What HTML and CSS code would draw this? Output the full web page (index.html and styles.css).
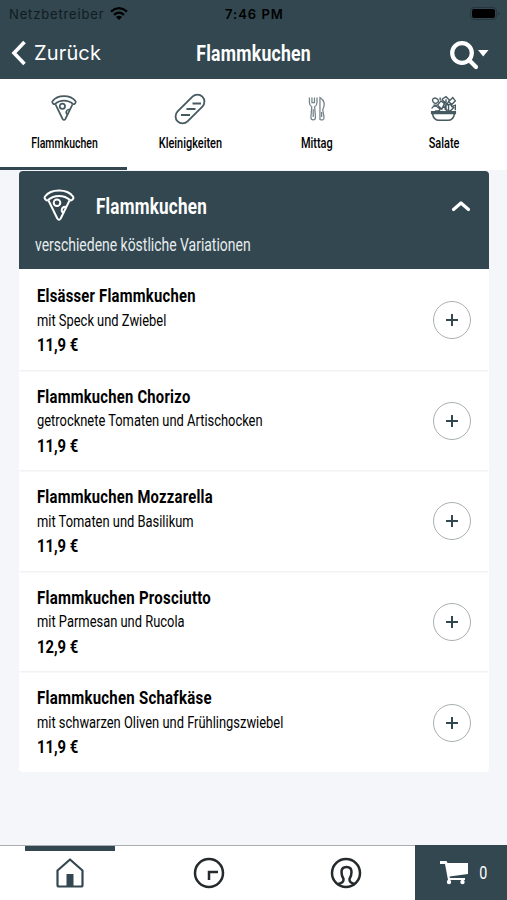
FILE: index.html
```html
<!DOCTYPE html>
<html lang="de">
<head>
<meta charset="utf-8">
<title>Flammkuchen</title>
<link rel="stylesheet" href="styles.css">
</head>
<body>
<svg class="defs" aria-hidden="true">
  <symbol id="pizza" viewBox="0 0 32 32">
    <path d="M2 7.500C8-.5 24-.5 30 7.500Q31 9 29.500 10.500Q28.500 12 27 11C21 5.500 11 5.500 5 11Q3.500 12 2.500 10.500Q1 9 2 7.500Z"/>
    <path d="M5.500 11.500L14.300 29.500Q16 32 17.700 29.500L26.500 11.500"/>
    <circle cx="14" cy="13.800" r="3.300"/>
    <path d="M23.500 18C18.500 17 17 23 21 24"/>
  </symbol>
</svg>
<header class="header">
  <div class="status">
    <span class="carrier">Netzbetreiber</span>
    <svg class="wifi" viewBox="0 0 18 13"><path d="M1 4.600Q9-2.200 17 4.600M4 7.800Q9 3.500 14 7.800" fill="none" stroke="#000" stroke-width="2.200"/><path d="M6 10Q9 7.500 12 10L9 13Z"/></svg>
    <span class="time">7:46 PM</span>
    <svg class="battery" viewBox="0 0 30 14"><rect x=".5" y=".5" width="26" height="12" rx="3.500" fill="none" stroke="#26363c"/><rect x="2" y="2" width="23" height="9" rx="2"/><path d="M28 4.500Q31 6.500 28 8.500Z" fill="#26363c"/></svg>
  </div>
  <div class="nav">
    <div class="back">
      <svg class="back-icon" viewBox="0 0 16 26"><path d="M13.500 2L3 13L13.500 24"/></svg>
      <span>Zurück</span>
    </div>
    <h1 class="page-title"><span class="narrow">Flammkuchen</span></h1>
    <svg class="search" viewBox="0 0 40 30"><circle cx="12" cy="13" r="9.800"/><path d="M19 20L26 27"/><path class="caret" d="M28 10H38.500L33.200 16.500Z"/></svg>
  </div>
</header>
<nav class="tabs">
  <a class="tab active"><svg class="tab-icon pizza"><use href="#pizza"/></svg><span class="narrow">Flammkuchen</span></a>
  <a class="tab"><svg class="tab-icon bread" viewBox="0 0 32 32"><rect x="-1.500" y="9" width="35" height="14" rx="7" transform="rotate(-45 16 16)"/><path d="M18.500 10.500H27M12.500 16H21.500M7 22H16"/></svg><span class="narrow">Kleinigkeiten</span></a>
  <a class="tab"><svg class="tab-icon cutlery" viewBox="0 0 32 32"><path d="M7 3V9Q7 12.500 9.800 14L8.800 26Q8.800 29.500 11.500 29.500T14.200 26L13.200 14Q16 12.500 16 9V3M10 3V9H13V3"/><path d="M19.500 3V29Q24.500 31 24.300 26L22.800 17.500Q27.500 8 19.500 3Z"/><path d="M11.500 17V26M21.500 20V26"/></svg><span class="narrow">Mittag</span></a>
  <a class="tab"><svg class="tab-icon salad" viewBox="0 0 32 32"><path d="M2 20H30V22H2ZM3 22Q4 30 11 30H21Q28 30 29 22"/><path class="leaves" d="M3 5Q6 2 9 5T7 10Q3 10 3 5M2 16Q5 11 10 15T6 19M9 12L13 7L17 10L14 17L9 12M14 5L19 2L23 6L20 11L14 5M22 8L27 3L30 7L26 11ZM18 12L24 11L28 15L24 19L18 17ZM11 17L17 14L20 19M4 12H9M25 14L30 12V18M12 3V6M19 5V17M22 12V19"/></svg><span class="narrow">Salate</span></a>
</nav>
<main class="content">
  <section class="card">
    <div class="card-head">
      <div class="card-row">
        <svg class="card-icon pizza"><use href="#pizza"/></svg>
        <h2><span class="narrow">Flammkuchen</span></h2>
        <svg class="chevron" viewBox="0 0 20 12"><path d="M2.500 9.500L10 3L17.500 9.500"/></svg>
      </div>
      <p><span class="narrow">verschiedene köstliche Variationen</span></p>
    </div>
    <ul class="items">
      <li><div><h3 class="narrow">Elsässer Flammkuchen</h3><p class="narrow">mit Speck und Zwiebel</p><strong class="narrow">11,9 €</strong></div><button aria-label="+"><svg viewBox="0 0 14 14"><path d="M7 1V13M1 7H13"/></svg></button></li>
      <li><div><h3 class="narrow">Flammkuchen Chorizo</h3><p class="narrow">getrocknete Tomaten und Artischocken</p><strong class="narrow">11,9 €</strong></div><button aria-label="+"><svg viewBox="0 0 14 14"><path d="M7 1V13M1 7H13"/></svg></button></li>
      <li><div><h3 class="narrow">Flammkuchen Mozzarella</h3><p class="narrow">mit Tomaten und Basilikum</p><strong class="narrow">11,9 €</strong></div><button aria-label="+"><svg viewBox="0 0 14 14"><path d="M7 1V13M1 7H13"/></svg></button></li>
      <li><div><h3 class="narrow wide">Flammkuchen Prosciutto</h3><p class="narrow">mit Parmesan und Rucola</p><strong class="narrow">12,9 €</strong></div><button aria-label="+"><svg viewBox="0 0 14 14"><path d="M7 1V13M1 7H13"/></svg></button></li>
      <li><div><h3 class="narrow wide">Flammkuchen Schafkäse</h3><p class="narrow">mit schwarzen Oliven und Frühlingszwiebel</p><strong class="narrow">11,9 €</strong></div><button aria-label="+"><svg viewBox="0 0 14 14"><path d="M7 1V13M1 7H13"/></svg></button></li>
    </ul>
  </section>
</main>
<footer class="bottom">
  <a class="dock active"><svg viewBox="0 0 32 32"><path d="M3.500 13.500L16 2.500L28.500 13.500V28Q28.500 29.500 27 29.500H5Q3.500 29.500 3.500 28Z"/><path class="solid" d="M12.500 17H19.500V29H12.500Z"/></svg></a>
  <a class="dock"><svg viewBox="0 0 32 32"><circle cx="16" cy="16" r="14"/><path d="M16 23V15H25"/></svg></a>
  <a class="dock"><svg viewBox="0 0 32 32"><circle cx="16" cy="16" r="14"/><path d="M8 27Q14 26 13.500 22Q11.500 19 11.500 15Q11.500 10 16.500 10T21.500 15Q21.500 19 19.500 22Q19 26 25 27"/></svg></a>
  <a class="cart"><svg viewBox="0 0 28 24"><path d="M0 0H6.500L7.500 2H28V13L9.500 15.500L10 17H25V19H8L5 3H0Z"/><circle cx="9" cy="21" r="2.200"/><circle cx="22.500" cy="21" r="2.200"/></svg><span class="narrow">0</span></a>
</footer>
</body>
</html>
```

FILE: styles.css
```css
* { box-sizing: border-box; margin: 0; padding: 0; }
body {
  width: 507px;
  height: 900px;
  display: flex;
  flex-direction: column;
  overflow: hidden;
  background: #f4f6fa;
  color: #000;
  font-family: Roboto, sans-serif;
}
svg { display: block; flex: none; fill: none; }
.defs { position: absolute; width: 0; height: 0; }
.narrow { display: block; width: max-content; white-space: nowrap; transform: scaleX(var(--sx, .73)); transform-origin: center; }

.header { height: 79px; background: #32474f; flex: none; }
.status { height: 27px; display: grid; grid-template-columns: 101px 101px 100px 1fr; align-items: center; padding: 0 7px 0 9px; font: 13px Inter, sans-serif; }
.carrier { letter-spacing: .85px; color: #111c20; }
.wifi { width: 18px; height: 13px; fill: #000; }
.time { font-weight: 600; letter-spacing: 1px; justify-self: start; padding-left: 14px; white-space: nowrap; }
.battery { width: 30px; height: 14px; fill: #000; justify-self: end; }
.nav { height: 52px; display: grid; grid-template-columns: 1fr auto 1fr; align-items: center; padding: 0 18px 0 11px; color: #fff; }
.back { display: flex; align-items: center; gap: 7px; font: 20px Inter, sans-serif; letter-spacing: .15px; }
.back-icon { width: 16px; height: 26px; stroke: #fff; stroke-width: 3.6; }
.page-title { font-size: 22px; line-height: 30px; padding: 2px 0 0 7px; --sx: .8; letter-spacing: .3px; }
.search { width: 40px; height: 30px; margin: 3px -1px 0 0; justify-self: end; stroke: #fff; stroke-width: 4.2; stroke-linecap: round; }
.search .caret { fill: #fff; stroke: none; }

.tabs { height: 91px; display: grid; grid-template-columns: repeat(4, 1fr); background: #fff; flex: none; }
.tab { display: flex; flex-direction: column; align-items: center; padding-top: 14px; font-size: 15px; line-height: 20px; font-weight: 500; }
.tab.active { border-bottom: 3px solid #32474f; --sx: .7; padding-left: 2px; }
.tab-icon { width: 32px; height: 32px; margin-bottom: 8px; stroke: #465a62; stroke-width: 1.8; }
.tab-icon.pizza { width: 26px; height: 26px; margin: 2px 0 12px; stroke-width: 2.1; }
.tab-icon.cutlery, .tab-icon.salad { width: 27px; height: 27px; margin: 2px 0 11px; }
.tab-icon.cutlery { width: 28px; stroke: #75848a; stroke-width: 1.5; }
.leaves { stroke-width: 1.6; }

.content { flex: 1; padding: 0 18px 0 19px; }
.card-head { height: 98px; margin-top: 1px; padding: 15px 18px 0 16px; background: #32474f; border-radius: 4px 4px 0 0; color: #fff; }
.card-row { display: flex; align-items: center; height: 40px; }
.card-icon { width: 32px; height: 32px; margin: -3px 0 0 8px; stroke: #fff; stroke-width: 2; }
.card h2 { margin-left: 21px; font-size: 22px; line-height: 30px; padding-top: 2px; --sx: .775; letter-spacing: .3px; flex: 1; }
.card .narrow { transform-origin: left; }
.chevron { width: 20px; height: 12px; stroke: #fff; stroke-width: 3.2; stroke-linecap: round; stroke-linejoin: round; }
.card-head p { font-size: 18px; line-height: 26px; margin-top: 6px; color: #e8edf0; --sx: .775; }
.items { list-style: none; background: #fff; border-radius: 0 0 4px 4px; }
.items li { display: flex; justify-content: space-between; align-items: center; height: 100.6px; padding: 2px 18px 0; box-shadow: 0 2px 0 -0.500px #f1f2f4; }
.items li > div { padding: 1px 0 0; }
.items li:last-child { box-shadow: none; }
.items h3 { font-size: 18px; line-height: 24.500px; --sx: .82; letter-spacing: .3px; }
.items h3.wide { --sx: .832; }
.items p { font-size: 16.500px; line-height: 24.500px; --sx: .782; color: #000; }
.items strong { font-size: 18.500px; line-height: 24.500px; --sx: .8; }
.items button { width: 38px; height: 38px; display: grid; place-items: center; border: 1px solid #a9afb2; border-radius: 50%; background: #fff; }
.items button svg { width: 14px; height: 14px; stroke: #32474f; stroke-width: 2; }

.bottom { height: 55px; display: grid; grid-template-columns: 140px 137px 138px 92px; flex: none; background: #fff; border-top: 1px solid #aaaeb2; }
.dock { position: relative; display: flex; justify-content: center; padding-top: 11px; }
.dock svg { width: 32px; height: 32px; stroke: #252a2c; stroke-width: 2.5; }
.dock.active svg { stroke: #32474f; stroke-width: 2.2; stroke-linejoin: round; }
.dock.active::before { content: ""; position: absolute; left: 25px; top: 0; width: 90px; height: 5px; background: #32474f; }
.solid { fill: #32474f; stroke: none; }
.cart { display: flex; align-items: center; gap: 10px; padding-left: 25px; margin-top: -1px; background: #32474f; color: #fff; font-size: 19px; }
.cart svg { width: 28px; height: 24px; fill: #fff; }
.cart .narrow { --sx: .75; }
```
